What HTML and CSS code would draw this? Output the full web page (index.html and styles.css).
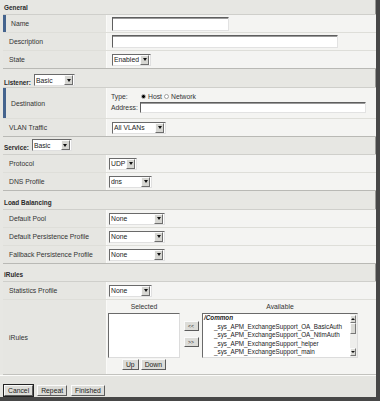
FILE: index.html
```html
<!DOCTYPE html>
<html lang="en">
<head>
<meta charset="UTF-8">
<meta name="viewport" content="width=device-width, initial-scale=1.0">
<title>New Virtual Server</title>
<link rel="stylesheet" href="styles.css">
</head>
<body>
<div class="page">

    <div class="head h14">General</div>
    <div class="rows">
        <div class="row req">
            <div class="lbl">Name</div>
            <div class="val"><input type="text" class="txt w117 h14"></div>
        </div>
        <div class="row">
            <div class="lbl">Description</div>
            <div class="val"><input type="text" class="txt w226 h13"></div>
        </div>
        <div class="row last">
            <div class="lbl">State</div>
            <div class="val">
                <span class="sel w39"><select><option>Enabled</option></select><span class="arr"></span></span>
            </div>
        </div>
    </div>

    <div class="head h18 pb1">Listener:
        <span class="sel w41 gap"><select><option>Basic</option></select><span class="arr"></span></span>
    </div>
    <div class="rows">
        <div class="row req dest">
            <div class="lbl">Destination</div>
            <div class="val col">
                <div class="line">
                    <span class="k">Type:</span>
                    <input type="radio" name="dtype" class="rad" checked> Host
                    <input type="radio" name="dtype" class="rad"> Network
                </div>
                <div class="line">
                    <span class="k">Address:</span>
                    <input type="text" class="txt w226 h11">
                </div>
            </div>
        </div>
        <div class="row last">
            <div class="lbl">VLAN Traffic</div>
            <div class="val">
                <span class="sel w54"><select><option>All VLANs</option></select><span class="arr"></span></span>
            </div>
        </div>
    </div>

    <div class="head h17 pb3">Service:
        <span class="sel w40 gap"><select><option>Basic</option></select><span class="arr"></span></span>
    </div>
    <div class="rows">
        <div class="row">
            <div class="lbl">Protocol</div>
            <div class="val tight">
                <span class="sel w28"><select><option>UDP</option></select><span class="arr"></span></span>
            </div>
        </div>
        <div class="row last">
            <div class="lbl">DNS Profile</div>
            <div class="val tight">
                <span class="sel w43"><select><option>dns</option></select><span class="arr"></span></span>
            </div>
        </div>
    </div>

    <div class="head h18">Load Balancing</div>
    <div class="rows">
        <div class="row">
            <div class="lbl">Default Pool</div>
            <div class="val tight">
                <span class="sel w56"><select><option>None</option></select><span class="arr"></span></span>
            </div>
        </div>
        <div class="row">
            <div class="lbl">Default Persistence Profile</div>
            <div class="val tight">
                <span class="sel w56"><select><option>None</option></select><span class="arr"></span></span>
            </div>
        </div>
        <div class="row last">
            <div class="lbl">Fallback Persistence Profile</div>
            <div class="val tight">
                <span class="sel w56"><select><option>None</option></select><span class="arr"></span></span>
            </div>
        </div>
    </div>

    <div class="head h17">iRules</div>
    <div class="rows">
        <div class="row">
            <div class="lbl">Statistics Profile</div>
            <div class="val tight">
                <span class="sel w43"><select><option>None</option></select><span class="arr"></span></span>
            </div>
        </div>
        <div class="row last irules">
            <div class="lbl">iRules</div>
            <div class="val pick-cell">
                <div class="pick">
                    <div class="title">Selected</div>
                    <div></div>
                    <div class="title">Available</div>

                    <div class="list"></div>
                    <div class="moves">
                        <button class="btn sm">&lt;&lt;</button>
                        <button class="btn sm">&gt;&gt;</button>
                    </div>
                    <div class="list avail">
                        <div class="items">
                            <div class="grp">/Common</div>
                            <div class="it">_sys_APM_ExchangeSupport_OA_BasicAuth</div>
                            <div class="it">_sys_APM_ExchangeSupport_OA_NtlmAuth</div>
                            <div class="it">_sys_APM_ExchangeSupport_helper</div>
                            <div class="it">_sys_APM_ExchangeSupport_main</div>
                        </div>
                        <div class="sb">
                            <span class="sb-btn up"></span>
                            <span class="sb-thumb"></span>
                            <span class="sb-fill"></span>
                            <span class="sb-btn dn"></span>
                        </div>
                    </div>

                    <div class="order">
                        <button class="btn">Up</button>
                        <button class="btn">Down</button>
                    </div>
                </div>
            </div>
        </div>
    </div>

    <div class="bar">
        <button class="btn def">Cancel</button>
        <button class="btn">Repeat</button>
        <button class="btn">Finished</button>
    </div>

</div>
</body>
</html>
```

FILE: styles.css
```css
body {
    margin: 0;
    font-family: "Liberation Sans", Arial, sans-serif;
    font-size: 6.8px;
    color: #333;
}

.page {
    width: 380px;
    height: 401px;
    box-sizing: border-box;
    background-color: #e7e7e3;
    border-right: 4px solid #474747;
    border-bottom: 4px solid #474747;
    box-shadow: inset -1px -1px 0 #9a9a96;
}

/* section headers */
.head {
    display: flex;
    align-items: flex-end;
    box-sizing: border-box;
    padding: 0 0 3px 4px;
    font-weight: bold;
    font-size: 6.4px;
    color: #2a2a2a;
}

.h14 { height: 14px; }
.h17 { height: 17px; }
.h18 { height: 18px; }
.pb1 { padding-bottom: 1px; }
.pb3 { padding-bottom: 3px; }

.head .gap {
    margin-left: 3px;
    font-weight: normal;
}

/* rows */
.rows {
    margin-left: 3px;
    border-top: 1px solid #cfcfcb;
}

.row {
    display: grid;
    grid-template-columns: 104px 1fr;
    height: 18px;
    box-sizing: border-box;
    border-bottom: 1px solid #deded9;
}

.row.last {
    border-bottom-color: #b9b9b5;
}

.row.dest {
    height: 31px;
}

.row.irules {
    height: 75px;
    border-bottom-color: #c2c2be;
}

.lbl {
    display: flex;
    align-items: center;
    padding-left: 6px;
    background-color: #e6e6e2;
    border-right: 1px solid #fafaf8;
}

.req .lbl {
    border-left: 3px solid #45648e;
    padding-left: 5px;
}

.val {
    display: flex;
    align-items: center;
    padding-left: 5px;
    background-color: #f4f4f2;
}

.val.tight {
    padding-left: 2px;
}

/* text inputs */
.txt {
    box-sizing: border-box;
    margin: 0;
    padding: 0 2px;
    font: inherit;
    background-color: #fff;
    border: 1px solid;
    border-color: #5e5e5e #e2e2e2 #e2e2e2 #5e5e5e;
    box-shadow: inset 0 1px 0 #9a9a9a;
}

.w117 { width: 117px; }
.w226 { width: 226px; }
.h14 .txt, .txt.h14 { height: 14px; }
.txt.h13 { height: 13px; }
.txt.h11 { height: 11px; }

/* select boxes */
.sel {
    display: inline-flex;
    align-items: center;
    height: 12px;
    box-sizing: border-box;
    background-color: #fff;
    border: 1px solid;
    border-color: #6a6a6a #e0e0e0 #e0e0e0 #6a6a6a;
}

.sel select {
    flex: 1;
    min-width: 0;
    height: 10px;
    margin: 0;
    padding: 0 0 0 1px;
    border: 0;
    background: transparent;
    font: inherit;
    font-size: 6.8px;
    color: #222;
    appearance: none;
    -webkit-appearance: none;
    outline: none;
}

.sel .arr {
    display: flex;
    align-items: center;
    justify-content: center;
    width: 7px;
    height: 8px;
    margin-right: 1px;
    background-color: #d6d6d2;
    border: 1px solid;
    border-color: #fbfbfb #6e6e6e #6e6e6e #fbfbfb;
}

.sel .arr::before {
    content: "";
    border-left: 2.5px solid transparent;
    border-right: 2.5px solid transparent;
    border-top: 3px solid #111;
}

.w28 { width: 28px; }
.w39 { width: 39px; }
.w40 { width: 40px; }
.w41 { width: 41px; }
.w43 { width: 43px; }
.w54 { width: 54px; }
.w56 { width: 56px; }

/* destination */
.val.col {
    flex-direction: column;
    align-items: flex-start;
    justify-content: center;
    gap: 2px;
    padding-left: 4px;
}

.line {
    display: flex;
    align-items: center;
}

.k {
    width: 29px;
}

.rad {
    appearance: none;
    -webkit-appearance: none;
    width: 5px;
    height: 5px;
    margin: 0 2px 0 1px;
    border: 1px solid #a0a0a0;
    border-radius: 50%;
    background-color: #fff;
}

.rad:checked {
    background: radial-gradient(circle, #000 0 1.4px, #fff 1.9px);
}

.line .rad ~ .rad {
    margin-left: 2px;
}

/* iRules picker */
.val.pick-cell {
    align-items: flex-start;
    padding: 2px 0 0 1px;
}

.pick {
    display: grid;
    grid-template-columns: 72px 22px 156px;
    grid-template-rows: 11px 45px 13px;
}

.title {
    text-align: center;
    line-height: 9px;
}

.list {
    box-sizing: border-box;
    background-color: #fff;
    border: 1px solid;
    border-color: #6a6a6a #dcdcdc #dcdcdc #6a6a6a;
}

.list.avail {
    display: flex;
}

.items {
    flex: 1;
    min-width: 0;
    padding: 0 0 0 1px;
    font-size: 6.3px;
    line-height: 8.6px;
    color: #222;
    white-space: nowrap;
}

.grp {
    font-weight: bold;
    font-style: italic;
}

.it {
    padding-left: 10px;
}

.sb {
    display: flex;
    flex-direction: column;
    flex: none;
    width: 6px;
    padding: 1px 1px 1px 0;
    background-color: #eeeeec;
}

.sb-btn,
.sb-thumb {
    box-sizing: border-box;
    background-color: #dadad6;
    border: 1px solid;
    border-color: #fbfbfb #777 #777 #fbfbfb;
}

.sb-btn {
    height: 8px;
    display: flex;
    align-items: center;
    justify-content: center;
}

.sb-btn.up::before {
    content: "";
    border-left: 2px solid transparent;
    border-right: 2px solid transparent;
    border-bottom: 2px solid #111;
}

.sb-btn.dn::before {
    content: "";
    border-left: 2px solid transparent;
    border-right: 2px solid transparent;
    border-top: 2px solid #111;
}

.sb-thumb {
    height: 11px;
}

.sb-fill {
    flex: 1;
}

.moves {
    display: flex;
    flex-direction: column;
    align-items: center;
    gap: 6px;
    padding-top: 8px;
}

.order {
    display: flex;
    justify-content: center;
    align-items: flex-start;
    gap: 2px;
    padding-top: 1px;
}

/* buttons */
.btn {
    height: 11px;
    margin: 0;
    padding: 0 3px;
    font-family: inherit;
    font-size: 6.8px;
    line-height: 9px;
    color: #222;
    background-color: #dcdcd8;
    border: 1px solid;
    border-color: #fafafa #5c5c5c #5c5c5c #fafafa;
    border-radius: 0;
    cursor: pointer;
}

.btn.sm {
    width: 15px;
    height: 10px;
    padding: 0;
    font-size: 5px;
}

.btn.def {
    outline: 1px solid #222;
}

.bar {
    display: flex;
    align-items: center;
    gap: 4px;
    height: 22px;
    box-sizing: border-box;
    padding: 7px 0 0 4px;
    background-color: #e4e4e0;
    border-top: 1px solid #fbfbf9;
}
```
